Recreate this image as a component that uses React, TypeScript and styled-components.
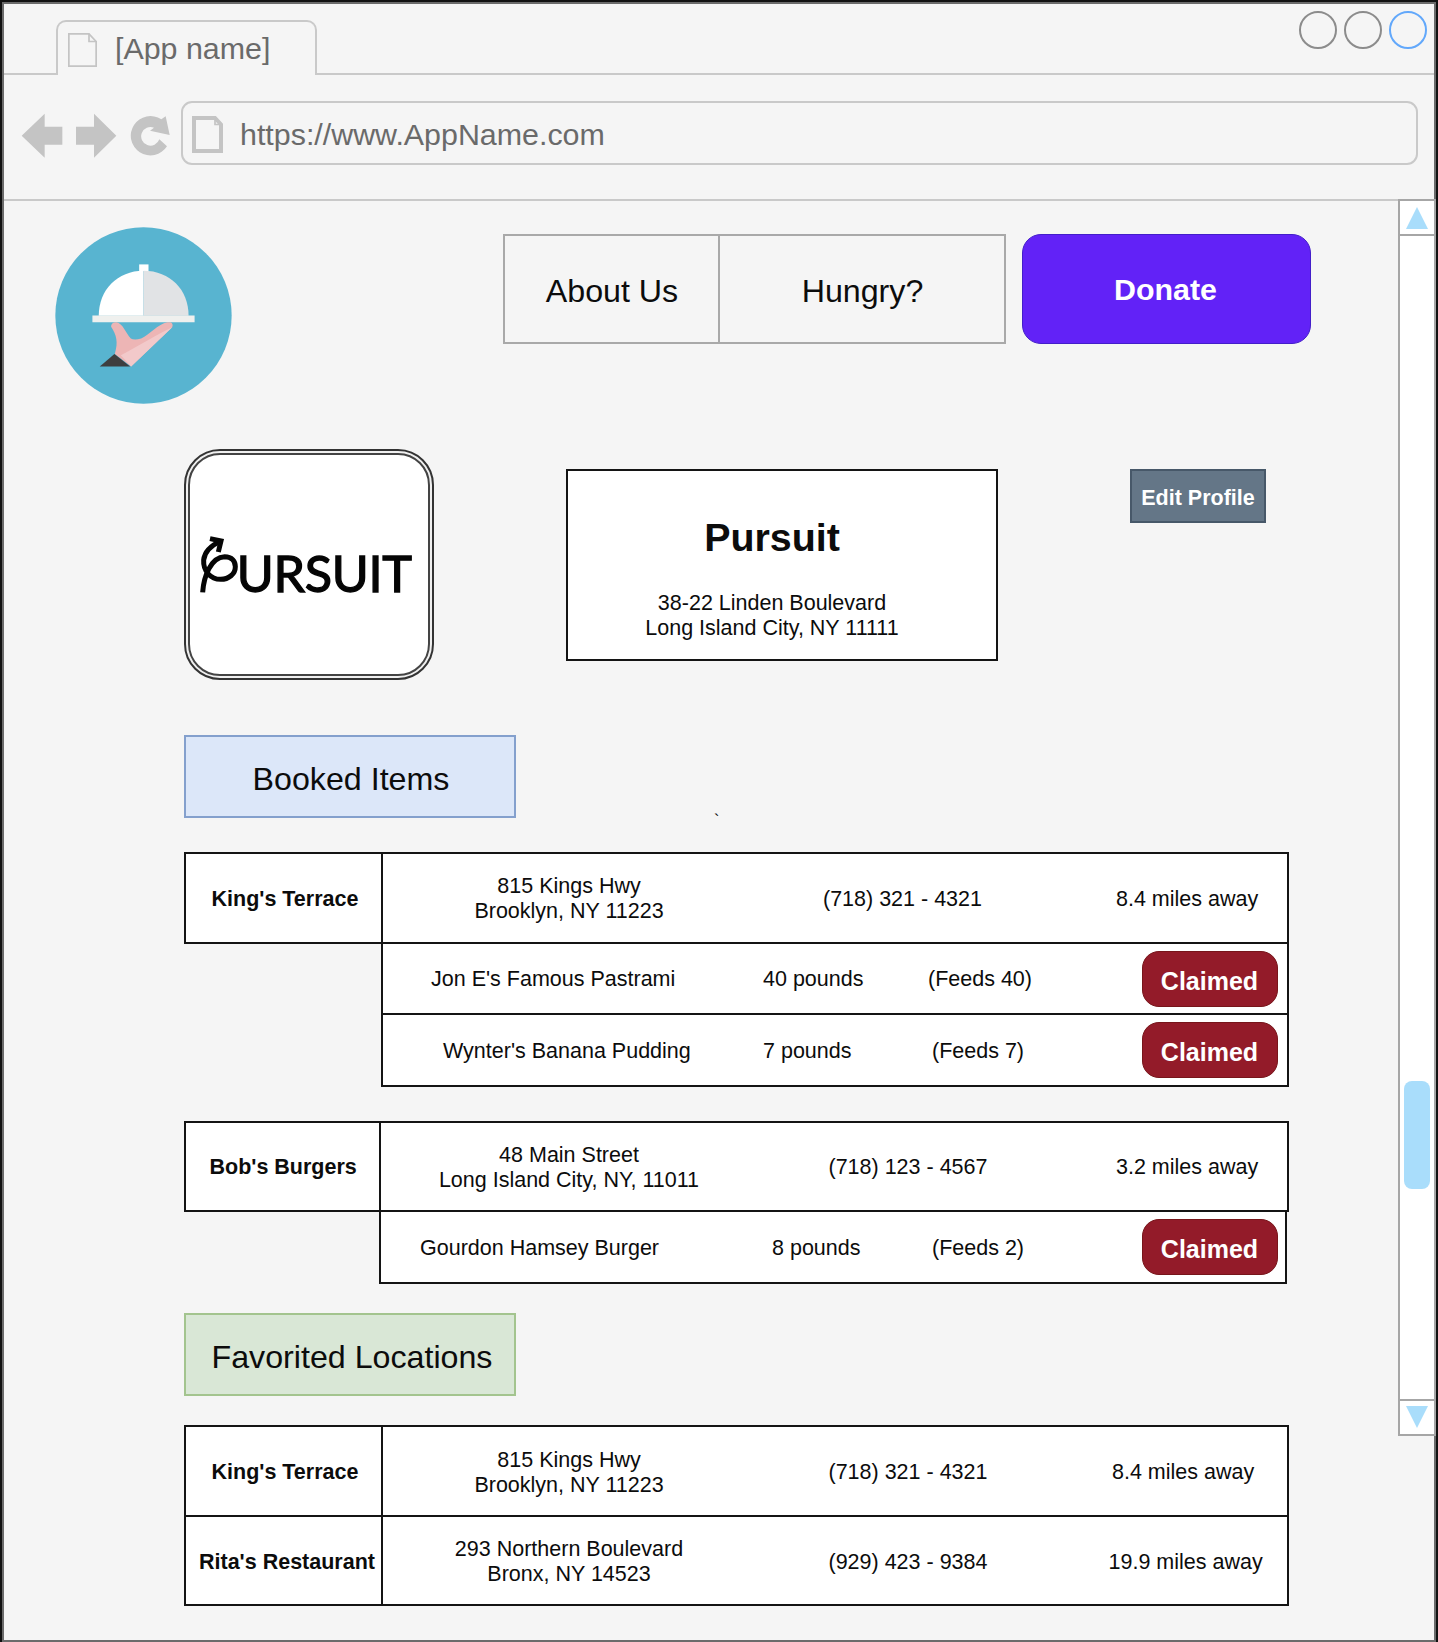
import React from "react";
import styled, { createGlobalStyle } from "styled-components";

const INK = "#141414";
const CHROME = "#c9c9c9";
const TRACK = "#a6a6a6";
const SKY = "#a9ddfb";

const GlobalStyle = createGlobalStyle`
  *, *::before, *::after { box-sizing: border-box; }
  body {
    margin: 0;
    background: #111;
    font-family: "Liberation Sans", Arial, Helvetica, sans-serif;
    color: #0c0c0c;
  }
`;

const Frame = styled.div`
  width: 1438px;
  height: 1642px;
  border: solid #111;
  border-width: 2px 2px 0 2px;
  background: #111;
`;

const Browser = styled.div`
  display: flex;
  flex-direction: column;
  width: 1434px;
  height: 1640px;
  border: 2px solid #6b6b6b;
  background: #f5f5f5;
`;

const TabBar = styled.header`
  display: flex;
  align-items: flex-end;
  height: 71px;
`;

const TabBarLine = styled.div<{ $width?: number }>`
  width: ${(p) => (p.$width ? `${p.$width}px` : "auto")};
  flex: ${(p) => (p.$width ? "none" : "1")};
  height: 71px;
  border-bottom: 2px solid ${CHROME};
  display: flex;
  justify-content: flex-end;
  gap: 6.8px;
  padding: 6.5px 7px 0 0;
`;

const Tab = styled.div`
  display: flex;
  align-items: center;
  gap: 18px;
  width: 261px;
  height: 55px;
  padding: 2px 0 0 10px;
  border: solid ${CHROME};
  border-width: 2px 2px 0;
  border-radius: 10px 10px 0 0;
  font-size: 30.4px;
  color: #6a6a6a;
`;

const TabTitle = styled.span`
  padding-bottom: 2px;
`;

const WindowDot = styled.span<{ $color: string }>`
  width: 38px;
  height: 38px;
  border: 2px solid ${(p) => p.$color};
  border-radius: 50%;
`;

const Toolbar = styled.div`
  display: flex;
  align-items: flex-start;
  height: 126px;
  padding: 26px 0 0 17px;
  border-bottom: 2px solid ${CHROME};
`;

const NavIcons = styled.svg`
  width: 150px;
  height: 46px;
  margin: 12px 10px 0 0;
  flex: none;
`;

const UrlBar = styled.div`
  display: flex;
  align-items: center;
  gap: 17px;
  width: 1237px;
  height: 64px;
  padding: 2px 0 0 9px;
  border: 2px solid ${CHROME};
  border-radius: 11px;
  font-size: 30.4px;
  color: #6a6a6a;
`;

const Viewport = styled.div`
  display: flex;
  flex: 1;
  min-height: 0;
`;

const Page = styled.main`
  width: 1394px;
  flex: none;
`;

const PageHeader = styled.div`
  display: flex;
  align-items: flex-start;
  height: 248px;
  padding: 26px 0 0 51px;
`;

const DishLogo = styled.svg`
  width: 177px;
  height: 177px;
  margin-right: 271px;
  flex: none;
`;

const Menu = styled.nav`
  display: flex;
  width: 503px;
  height: 110px;
  margin: 7px 16px 0 0;
  border: 2px solid #a9a9a9;
`;

const MenuItem = styled.a<{ $width: number }>`
  display: flex;
  align-items: center;
  justify-content: center;
  width: ${(p) => p.$width}px;
  padding: 5px 0 0 1px;
  font-size: 32.2px;
  & + & { border-left: 2px solid #a9a9a9; }
`;

const DonateButton = styled.button`
  width: 289px;
  height: 110px;
  margin-top: 7px;
  padding: 1px 2px 0 0;
  border: 1px solid #431ec9;
  border-radius: 19px;
  background: #6222f7;
  color: #fff;
  font: bold 30.4px "Liberation Sans", Arial, sans-serif;
`;

const Profile = styled.section`
  display: flex;
  align-items: flex-start;
  height: 286px;
  padding-left: 180px;
`;

const LogoCard = styled.div`
  width: 250px;
  height: 231px;
  padding: 2px;
  border: 2px solid #333;
  border-radius: 36px;
  background: #f0f0f0;
  flex: none;
`;

const LogoCardInner = styled.div`
  display: flex;
  width: 242px;
  height: 223px;
  padding: 77px 0 0 6px;
  border: 2px solid #444;
  border-radius: 32px;
  background: #fff;
`;

const PursuitLogo = styled.svg`
  width: 225px;
  height: 90px;
  flex: none;
`;

const InfoCard = styled.div`
  width: 432px;
  height: 192px;
  margin: 20px 132px 0 132px;
  padding: 42px 20px 0 0;
  border: 2px solid ${INK};
  background: #fff;
  text-align: center;
`;

const InfoTitle = styled.h1`
  margin: 0 0 30px;
  font-size: 39.4px;
  line-height: 48px;
`;

const Address = styled.div`
  font-size: 21.5px;
  line-height: 25px;
  white-space: pre-line;
  text-align: center;
`;

const EditButton = styled.button`
  width: 136px;
  height: 54px;
  margin-top: 20px;
  padding: 4px 0 0;
  border: 2px solid #475869;
  background: #647687;
  color: #fff;
  font: bold 21.5px "Liberation Sans", Arial, sans-serif;
  white-space: nowrap;
`;

const Heading = styled.div<{ $top?: number }>`
  display: flex;
  align-items: flex-end;
  margin-top: ${(p) => p.$top ?? 0}px;
  padding-left: 180px;
`;

const SectionLabel = styled.h2<{ $fill: string; $line: string; $shift: number }>`
  display: flex;
  align-items: center;
  justify-content: center;
  width: 332px;
  height: 83px;
  margin: 0;
  padding: 5px 0 0 ${(p) => p.$shift}px;
  border: 2px solid ${(p) => p.$line};
  background: ${(p) => p.$fill};
  font-size: 32.2px;
  font-weight: 400;
`;

const StrayMark = styled.span`
  margin-left: 198px;
  font-size: 16px;
  line-height: 9px;
  height: 2px;
`;

const Table = styled.div<{ $top: number }>`
  width: 1105px;
  margin: ${(p) => p.$top}px 0 0 180px;
`;

const Row = styled.div<{ $joined?: boolean }>`
  display: flex;
  height: 91.5px;
  margin-top: ${(p) => (p.$joined ? -2 : 0)}px;
  border: 2px solid ${INK};
  background: #fff;
  font-size: 21.5px;
  white-space: nowrap;
  align-items: center;
`;

const NameCell = styled.div<{ $width: number; $indent: number }>`
  display: flex;
  align-items: center;
  align-self: stretch;
  width: ${(p) => p.$width}px;
  padding: 3px 0 0 ${(p) => p.$indent}px;
  border-right: 2px solid ${INK};
  font-weight: bold;
  flex: none;
`;

const AddressCell = styled(Address)<{ $width: number }>`
  width: ${(p) => p.$width}px;
  padding-top: 3px;
  flex: none;
`;

const Field = styled.div<{ $width?: number; $gap?: number }>`
  width: ${(p) => (p.$width ? `${p.$width}px` : "auto")};
  margin-left: ${(p) => p.$gap ?? 0}px;
  padding-top: 3px;
  flex: none;
`;

const ItemRow = styled.div<{ $left: number; $indent: number }>`
  display: flex;
  align-items: center;
  width: 908px;
  height: 73.6px;
  margin: -2px 0 0 ${(p) => p.$left}px;
  padding-left: ${(p) => p.$indent}px;
  border: 2px solid ${INK};
  background: #fff;
  font-size: 21.5px;
  white-space: nowrap;
`;

const ClaimedButton = styled.button`
  width: 136px;
  height: 56px;
  margin-top: 1px;
  padding: 5px 1px 0 0;
  border: 1px solid #77151a;
  border-radius: 17px;
  background: #931b29;
  color: #fff;
  font: bold 25px "Liberation Sans", Arial, sans-serif;
  flex: none;
`;

const ScrollTrack = styled.aside`
  display: flex;
  flex-direction: column;
  width: 38px;
  height: 1237px;
  margin: -2px -2px 0 0;
  border: 2px solid ${TRACK};
  background: #fff;
  flex: none;
`;

const ScrollArrow = styled.svg<{ $end?: boolean }>`
  width: 34px;
  height: 35px;
  flex: none;
  border: solid ${TRACK};
  border-width: ${(p) => (p.$end ? "2px 0 0" : "0 0 2px")};
`;

const ScrollSpace = styled.div`
  flex: 1;
  padding: 845px 4px 0 4px;
`;

const ScrollThumb = styled.div`
  height: 108px;
  border-radius: 8px;
  background: ${SKY};
`;

const PageGlyph = ({ w, h, stroke }: { w: number; h: number; stroke: number }) => {
  const s = stroke / 2;
  const f = 8;
  return (
    <svg width={w} height={h} fill="none" stroke="#c4c4c4" strokeWidth={stroke}>
      <path d={`M${s} ${s}H${w - f}L${w - s} ${f + 0.5}V${h - s}H${s}Z`} />
      <path d={`M${w - f} ${s}V${f + 0.5}H${w - s}`} strokeWidth="1.7" />
    </svg>
  );
};

type Item = { name: string; amount: string; feeds: string; x: [number, number, number] };

const ClaimedItem = ({ item, left }: { item: Item; left: number }) => {
  const [a, b, c] = item.x;
  return (
    <ItemRow $left={left} $indent={a - 185 - left}>
      <Field $width={b - a}>{item.name}</Field>
      <Field $width={c - b}>{item.amount}</Field>
      <Field $width={1141 - c}>{item.feeds}</Field>
      <ClaimedButton>Claimed</ClaimedButton>
    </ItemRow>
  );
};

type Place = {
  name: string;
  indent: number;
  nameWidth: number;
  address: string;
  phone: string;
  distance: string;
  phoneX: number;
  distanceX: number;
};

const PlaceRow = ({ place, joined }: { place: Place; joined?: boolean }) => {
  const start = 186 + place.nameWidth;
  const addressWidth = (569 - start) * 2;
  return (
    <Row $joined={joined}>
      <NameCell $width={place.nameWidth} $indent={place.indent}>
        {place.name}
      </NameCell>
      <AddressCell $width={addressWidth}>{place.address}</AddressCell>
      <Field $width={place.distanceX - place.phoneX} $gap={place.phoneX - start - addressWidth}>
        {place.phone}
      </Field>
      <Field>{place.distance}</Field>
    </Row>
  );
};

const kings = {
  name: "King's Terrace",
  indent: 25.5,
  nameWidth: 197,
  address: "815 Kings Hwy\nBrooklyn, NY 11223",
  phone: "(718) 321 - 4321",
  distance: "8.4 miles away",
};

const bobs: Place = {
  name: "Bob's Burgers",
  indent: 23.5,
  nameWidth: 195,
  address: "48 Main Street\nLong Island City, NY, 11011",
  phone: "(718) 123 - 4567",
  distance: "3.2 miles away",
  phoneX: 828.5,
  distanceX: 1116,
};

const ritas: Place = {
  name: "Rita's Restaurant",
  indent: 13,
  nameWidth: 197,
  address: "293 Northern Boulevard\nBronx, NY 14523",
  phone: "(929) 423 - 9384",
  distance: "19.9 miles away",
  phoneX: 828.5,
  distanceX: 1108.5,
};

export default function App() {
  return (
    <>
      <GlobalStyle />
      <Frame>
        <Browser>
          <TabBar>
            <TabBarLine $width={52} />
            <Tab>
              <PageGlyph w={29} h={34} stroke={1.7} />
              <TabTitle>[App name]</TabTitle>
            </Tab>
            <TabBarLine>
              <WindowDot $color="#8c8c8c" />
              <WindowDot $color="#8c8c8c" />
              <WindowDot $color="#62a8fb" />
            </TabBarLine>
          </TabBar>
          <Toolbar>
            <NavIcons viewBox="63 338 450 138">
              <g fill="#c4c4c4">
                <path d="M65 406L134 340V379H187V433H134V472Z" />
                <path d="M349 406L282 340V379H228V433H282V472Z" />
                <path d="M497 348L509 404L450 391L462 382A28 28 0 1 0 478 417L501 438A59 59 0 1 1 484 357Z" />
              </g>
            </NavIcons>
            <UrlBar>
              <PageGlyph w={31} h={37} stroke={4} />
              <span>https://www.AppName.com</span>
            </UrlBar>
          </Toolbar>
          <Viewport>
            <Page>
              <PageHeader>
                <DishLogo viewBox="45 50 530 530">
                  <circle cx="310" cy="315" r="264" fill="#58b4d0" />
                  <path d="M297 162H325V182H297Z" fill="#fff" />
                  <path d="M176 316C176 238 232 181 310 181V316Z" fill="#fff" />
                  <path d="M445 316C445 238 390 181 310 181V316Z" fill="#e1e3e5" />
                  <path d="M157 315H463V335H157Z" fill="#eff0ee" />
                  <path
                    d="M213 349Q212 335 229 335C248 338 257 367 272 384Q282 390 303 384C329 371 354 340 381 335H391Q400 339 396 350L273 468L224 430C235 395 229 373 213 349Z"
                    fill="#edb5b5"
                  />
                  <path d="M396 350L273 468L242 434C305 401 348 373 396 350Z" fill="#f2c9ca" />
                  <path d="M179 468L223 430L270 468Z" fill="#3e3e3f" />
                </DishLogo>
                <Menu>
                  <MenuItem $width={213}>About Us</MenuItem>
                  <MenuItem $width={286}>Hungry?</MenuItem>
                </Menu>
                <DonateButton>Donate</DonateButton>
              </PageHeader>

              <Profile>
                <LogoCard>
                  <LogoCardInner>
                    <PursuitLogo viewBox="80 305 675 270">
                      <g fill="none" stroke="#050505" strokeWidth="15">
                        <path d="M100 486C103 440 124 380 166 379C188 379 198 393 198 409C198 431 178 447 154 447C124 447 101 422 103 389C106 362 128 344 155 332" />
                        <path d="M122 325L155 332L147 365" />
                      </g>
                      <text
                        x="202"
                        y="485"
                        fontFamily="Lato, sans-serif"
                        fontSize="151"
                        fontWeight="400"
                        fill="#050505"
                        stroke="#050505"
                        strokeWidth="4"
                        textLength="526"
                      >
                        URSUIT
                      </text>
                    </PursuitLogo>
                  </LogoCardInner>
                </LogoCard>
                <InfoCard>
                  <InfoTitle>Pursuit</InfoTitle>
                  <Address>{"38-22 Linden Boulevard\nLong Island City, NY 11111"}</Address>
                </InfoCard>
                <EditButton>Edit Profile</EditButton>
              </Profile>

              <Heading>
                <SectionLabel $fill="#dce7f9" $line="#84a0cd" $shift={2}>
                  Booked Items
                </SectionLabel>
                <StrayMark>`</StrayMark>
              </Heading>
              <Table $top={34}>
                <PlaceRow place={{ ...kings, phoneX: 823, distanceX: 1116 }} />
                <ClaimedItem
                  left={197}
                  item={{ name: "Jon E's Famous Pastrami", amount: "40 pounds", feeds: "(Feeds 40)", x: [430, 762, 927] }}
                />
                <ClaimedItem
                  left={197}
                  item={{ name: "Wynter's Banana Pudding", amount: "7 pounds", feeds: "(Feeds 7)", x: [442, 762, 931] }}
                />
              </Table>
              <Table $top={34}>
                <PlaceRow place={bobs} />
                <ClaimedItem
                  left={195}
                  item={{ name: "Gourdon Hamsey Burger", amount: "8 pounds", feeds: "(Feeds 2)", x: [419, 771, 931] }}
                />
              </Table>

              <Heading $top={29.5}>
                <SectionLabel $fill="#d9e7d6" $line="#a3c48e" $shift={4}>
                  Favorited Locations
                </SectionLabel>
              </Heading>
              <Table $top={29}>
                <PlaceRow place={{ ...kings, phoneX: 828.5, distanceX: 1112 }} />
                <PlaceRow joined place={ritas} />
              </Table>
            </Page>

            <ScrollTrack>
              <ScrollArrow viewBox="0 0 34 33">
                <path d="M17 6L28 28H6Z" fill={SKY} />
              </ScrollArrow>
              <ScrollSpace>
                <ScrollThumb />
              </ScrollSpace>
              <ScrollArrow $end viewBox="0 0 34 33">
                <path d="M17 27L28 5H6Z" fill={SKY} />
              </ScrollArrow>
            </ScrollTrack>
          </Viewport>
        </Browser>
      </Frame>
    </>
  );
}
